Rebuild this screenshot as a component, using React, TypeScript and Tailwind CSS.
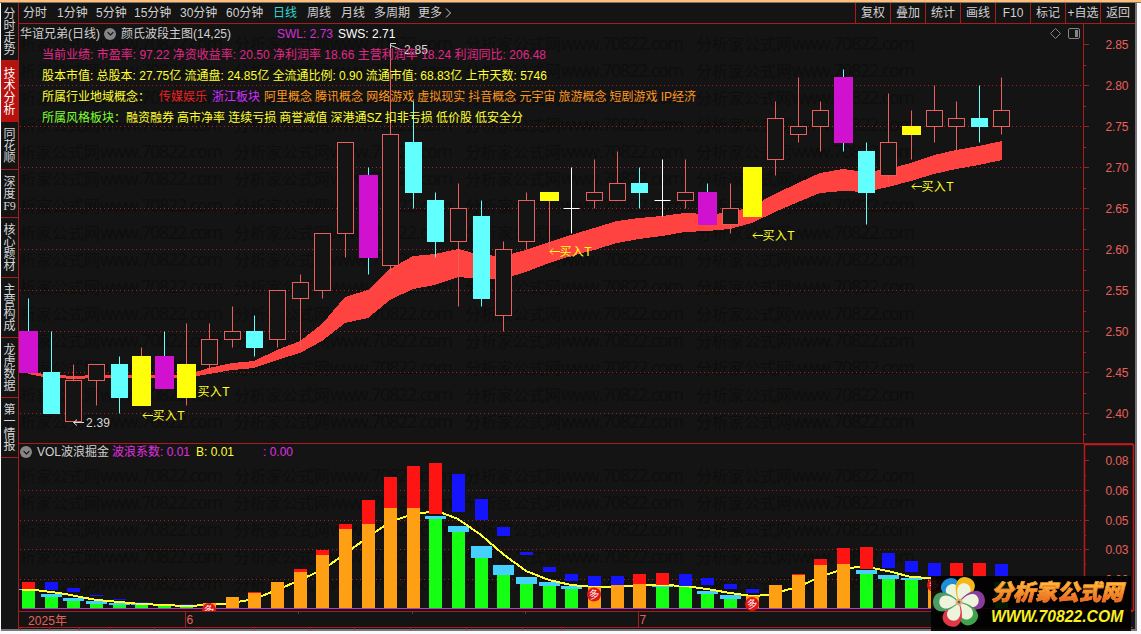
import { HiOutlineChevronDown } from 'react-icons/hi';

const FONT = "font-['Liberation_Sans','Noto_Sans_CJK_SC',sans-serif]";

// Bar centres on the time axis, shared by both panels
const BAR_X = [
  28, 51, 73, 96, 119, 141, 164, 186, 209, 232, 254, 277, 300, 322, 345, 368, 390, 413, 435, 458, 481, 503,
  526, 549, 571, 594, 617, 639, 662, 685, 707, 730, 752, 775, 798, 820, 843, 866, 888, 911, 934, 956, 979, 1001,
];
const barX = (i: number) => BAR_X[i] + 0.5;
const priceY = (p: number) => Math.round(85 + (280 - p) * 8.2) + 0.5;

type Kind = 'up' | 'down' | 'buy' | 'sell' | 'doji';

// [kind, high, bodyTop, bodyBottom, low] in cents
const CANDLES: [Kind, number, number, number, number][] = [
  ['sell', 254, 250, 245, 245],
  ['down', 250, 245, 240, 240],
  ['up', 246, 244, 239, 239],
  ['up', 246, 246, 244, 241],
  ['down', 247, 246, 242, 240],
  ['buy', 248, 247, 241, 241],
  ['sell', 250, 247, 243, 243],
  ['buy', 251, 246, 242, 241],
  ['up', 251, 249, 246, 245],
  ['up', 253, 250, 249, 248],
  ['down', 252, 250, 248, 247],
  ['up', 255, 255, 249, 248],
  ['up', 257, 256, 254, 248],
  ['up', 262, 262, 255, 254],
  ['up', 273, 273, 262, 259],
  ['sell', 270, 269, 259, 257],
  ['up', 285, 274, 258, 257],
  ['down', 278, 273, 267, 265],
  ['down', 267, 266, 261, 259],
  ['up', 268, 265, 261, 253],
  ['down', 266, 264, 254, 253],
  ['up', 261, 260, 252, 250],
  ['up', 267, 266, 261, 260],
  ['buy', 267, 267, 266, 260],
  ['doji', 270, 265, 265, 262],
  ['up', 271, 267, 266, 265],
  ['up', 272, 268, 266, 266],
  ['down', 270, 268, 267, 265],
  ['doji', 271, 266, 266, 264],
  ['up', 271, 267, 266, 265],
  ['sell', 268, 267, 263, 263],
  ['up', 268, 265, 263, 262],
  ['buy', 270, 270, 264, 264],
  ['up', 278, 276, 271, 269],
  ['up', 281, 275, 274, 273],
  ['up', 278, 277, 275, 272],
  ['sell', 282, 281, 273, 272],
  ['down', 273, 272, 267, 263],
  ['up', 279, 273, 269, 268],
  ['buy', 277, 275, 274, 271],
  ['up', 280, 277, 275, 273],
  ['up', 278, 276, 275, 272],
  ['down', 280, 276, 275, 273],
  ['up', 281, 277, 275, 274],
];

// Moving band: [x, top, bottom]
const BAND = [
  [28, 370, 374], [43, 374, 377], [73, 376, 379], [96, 375, 378], [186, 375, 378], [209, 368, 374],
  [232, 363, 370], [254, 361, 368], [277, 350, 360], [300, 341, 353], [322, 324, 341], [345, 297, 323],
  [368, 290, 318], [390, 269, 300], [413, 256, 289], [435, 254, 285], [458, 249, 277], [481, 255, 279],
  [503, 256, 279], [526, 250, 272], [549, 242, 263], [571, 235, 256], [594, 228, 250], [617, 221, 243],
  [639, 218, 239], [662, 216, 236], [685, 213, 232], [707, 214, 231], [730, 213, 229], [752, 206, 223],
  [775, 194, 212], [798, 183, 202], [820, 173, 193], [843, 169, 191], [866, 172, 192], [888, 169, 187],
  [911, 163, 181], [934, 155, 174], [956, 150, 169], [979, 146, 165], [1002, 141, 160],
];
const bandPoints = [
  ...BAND.map(([x, t]) => `${x},${t}`),
  ...[...BAND].reverse().map(([x, , b]) => `${x},${b}`),
].join(' ');

type Vol = { g?: number; o?: number; r?: [number, number]; b?: [number, number]; c?: [number, number] };
const VOLS: Vol[] = [
  { g: 589, r: [582, 589], c: [589, 590] },
  { g: 596, b: [582, 590], c: [594, 597] },
  { g: 600, b: [588, 592], c: [598, 601] },
  { g: 603, b: [595, 596], c: [601, 604] },
  { g: 604, b: [599, 600], c: [603, 605] },
  { g: 605, b: [602, 603], c: [603, 605] },
  { g: 606, c: [605, 606] },
  { g: 607, b: [604, 605], c: [606, 607] },
  { o: 603 },
  { o: 597 },
  { o: 593, r: [592, 593] },
  { o: 582 },
  { o: 572, r: [569, 572] },
  { o: 555, r: [550, 555] },
  { o: 529, r: [524, 529] },
  { o: 524, r: [500, 524] },
  { o: 508, r: [477, 508] },
  { o: 508, r: [466, 508] },
  { g: 519, r: [463, 514], c: [516, 519] },
  { g: 532, b: [474, 512], c: [526, 532] },
  { g: 558, b: [499, 520], c: [546, 558] },
  { g: 575, b: [527, 536], c: [565, 575] },
  { g: 584, b: [552, 555], c: [577, 584] },
  { g: 586, b: [567, 572], c: [582, 586] },
  { g: 589, b: [574, 581], c: [586, 589] },
  { o: 587, b: [576, 586] },
  { o: 585, b: [576, 585] },
  { o: 584, r: [574, 584] },
  { g: 586, r: [573, 585], c: [585, 587] },
  { g: 587, b: [574, 586], c: [586, 587] },
  { g: 594, b: [578, 585], c: [591, 594] },
  { g: 599, b: [584, 589], c: [595, 599] },
  { o: 596, b: [589, 593] },
  { o: 585 },
  { o: 575, r: [574, 575] },
  { o: 565, r: [559, 565] },
  { o: 564, r: [548, 564] },
  { g: 574, r: [547, 569], c: [570, 574] },
  { g: 579, b: [553, 568], c: [575, 579] },
  { g: 580, b: [561, 572], c: [578, 580] },
  { o: 580, b: [563, 576] },
  { r: [563, 576] },
  { r: [563, 576] },
  { g: 582, b: [564, 576] },
];

const VOL_LINE =
  '22,590 35,590 51,592 66,594 80,597 97,600 119,602 142,604 164,605 186,606 209,605 232,603 254,599 277,590 300,580 322,570 345,554 368,537 390,522 413,514 430,512 442,513 458,519 481,535 503,554 526,571 549,580 571,585 594,587 617,587 639,585 662,585 685,586 707,589 730,593 752,596 768,595 775,593 798,587 820,577 843,569 858,567 872,568 888,571 911,577 931,578';

const PERIODS = [
  { label: '分时', w: 'w-[34px]' },
  { label: '1分钟', w: 'w-[39px]' },
  { label: '5分钟', w: 'w-[38px]' },
  { label: '15分钟', w: 'w-[46px]' },
  { label: '30分钟', w: 'w-[46px]' },
  { label: '60分钟', w: 'w-[47px]' },
  { label: '日线', w: 'w-[34px]', active: true },
  { label: '周线', w: 'w-[34px]' },
  { label: '月线', w: 'w-[33px]' },
  { label: '多周期', w: 'w-[44px]' },
  { label: '更多', w: 'w-[27px]' },
];

const TOOLS = ['复权', '叠加', '统计', '画线', 'F10', '标记', '+自选', '返回'];

const SIDE_TABS = [
  { text: '分时走势', h: 'h-[58px]' },
  { text: '技术分析', h: 'h-[61px]', active: true },
  { text: '同花顺', h: 'h-[48px]' },
  { text: '深度F9', h: 'h-[48px]' },
  { text: '核心题材', h: 'h-[60px]' },
  { text: '主营构成', h: 'h-[60px]' },
  { text: '龙虎数据', h: 'h-[60px]' },
  { text: '第一情报', h: 'h-[60px]' },
];

const BUY_MARKS = [
  [142, 415],
  [187, 391],
  [549, 251],
  [752, 235],
  [911, 186],
];

function Sidebar() {
  return (
    <nav className="w-[18px] shrink-0 border-r border-[#a81c1c] text-[12px] leading-[12px] text-[#d4d4d4]">
      {SIDE_TABS.map((t) => (
        <div
          key={t.text}
          className={`${t.h} flex flex-col items-center justify-center ${
            t.active ? 'bg-[#b8120f] text-white' : 'border-b border-[#a81c1c]'
          }`}
        >
          {t.text.replace('F9', '').split('').map((c) => (
            <span key={c}>{c}</span>
          ))}
          {t.text.includes('F9') && <span className="font-['Liberation_Serif',serif]">F9</span>}
        </div>
      ))}
    </nav>
  );
}

function Toolbar() {
  return (
    <header className="flex h-[21px] items-stretch justify-between border-b border-[#a81c1c] text-[12px] leading-[20px] text-[#d0d0d0]">
      <div className="flex pl-1">
        {PERIODS.map((p) => (
          <span key={p.label} className={`${p.w} whitespace-nowrap ${p.active ? 'text-[#2fd8d0]' : ''}`}>
            {p.label}
          </span>
        ))}
        <svg className="mt-[5px] h-[10px] w-[7px]" viewBox="0 0 7 10" fill="none" stroke="#d0d0d0">
          <path d="M1 .5 5.5 5 1 9.5" />
        </svg>
      </div>
      <div className="flex">
        {TOOLS.map((t) => (
          <button key={t} className="w-[35px] border-l border-[#a81c1c] text-center whitespace-nowrap">
            {t}
          </button>
        ))}
      </div>
    </header>
  );
}

// Repeated faint site name behind the plots
function Watermark({ from, to }: { from: number; to: number }) {
  const rows: number[] = [];
  for (let y = 50; y < 610; y += 27) if (y > from && y < to - 4) rows.push(y);
  return (
    <g fill="#0e0e0e">
      {rows.map((y) =>
        [4, 234, 465, 696].map((x) => (
          <g key={`${x}-${y}`}>
            <text x={x} y={y} fontSize="16" textLength="96">
              分析家公式网
            </text>
            <text x={x + 96} y={y} fontSize="17.5" fontFamily="Open Sans" textLength="123">
              www.70822.com
            </text>
          </g>
        ))
      )}
    </g>
  );
}

function Candle({ i, data }: { i: number; data: (typeof CANDLES)[number] }) {
  const [kind, high, top, bottom, low] = data;
  const x = barX(i);
  const y1 = priceY(top);
  const y2 = priceY(bottom);
  const wick = { up: '#e8605c', down: '#62ffff', buy: '#e8605c', sell: '#62ffff', doji: '#ffffff' }[kind];

  if (kind === 'doji') {
    return (
      <g stroke="#fff">
        <path d={`M${x} ${priceY(high)}V${priceY(low)}M${x - 8} ${y1}h16`} />
      </g>
    );
  }
  return (
    <g>
      <path d={`M${x} ${priceY(high)}V${y1}M${x} ${y2}V${priceY(low)}`} stroke={wick} />
      {kind === 'up' && <rect x={x - 8} y={y1} width="16" height={y2 - y1} fill="#141414" stroke="#e8605c" />}
      {kind === 'down' && <rect x={x - 8.5} y={y1 - 0.5} width="17" height={y2 - y1 + 1} fill="#62ffff" />}
      {kind === 'buy' && <rect x={x - 9.5} y={y1 - 0.5} width="19" height={y2 - y1 + 1} fill="#ffff0a" />}
      {kind === 'sell' && <rect x={x - 9.5} y={y1 - 0.5} width="19" height={y2 - y1 + 1} fill="#d012d0" />}
    </g>
  );
}

function PriceChart() {
  const ticks = [285, 280, 275, 270, 265, 260, 255, 250, 245, 240];
  return (
    <svg className="block h-[419px] w-[1116px]" viewBox="19 24 1116 419">
      <Watermark from={24} to={443} />
      {ticks.slice(1).map((p) => (
        <path key={p} d={`M20 ${priceY(p)}H1083`} stroke="#a82020" strokeDasharray="1 3" />
      ))}
      <polygon points={bandPoints} fill="#ff4340" shapeRendering="crispEdges" />
      {CANDLES.map((c, i) => (
        <Candle key={i} i={i} data={c} />
      ))}

      <path d="M1083.5 24V443" stroke="#a81c1c" />
      {ticks.map((p) => (
        <g key={p}>
          <path d={`M1083 ${priceY(p)}h6M1083 ${priceY(p) + 21}h3`} stroke="#a81c1c" />
          <text x="1105.5" y={priceY(p) + 4.5} fontSize="12" fill="#e8605c" textLength="23">
            {(p / 100).toFixed(2)}
          </text>
        </g>
      ))}

      {/* highest and lowest prices */}
      <g stroke="#d8d8d8" fill="none">
        <path d="M402 50 391 45.500M396 43.500H390.500V48" />
        <path d="M84 422.500H73.500M77 419.500 73.500 422.500 77 425.500" />
      </g>
      <g fontSize="12" fill="#d8d8d8">
        <text x="404" y="54" textLength="24">2.85</text>
        <text x="86" y="427" textLength="24">2.39</text>
      </g>

      {BUY_MARKS.map(([x, y]) => (
        <g key={x}>
          {x !== 187 && <path d={`M${x + 11} ${y + 0.5}H${x + 1}M${x + 4} ${y - 2.5}l-3 3 3 3`} stroke="#ffff20" fill="none" />}
          <text x={x + 10.5} y={y + 4.5} fontSize="12" fill="#ffff20" textLength="32">
            买入T
          </text>
        </g>
      ))}

      <g stroke="#858585" fill="none">
        <path d="M1055.500 28.500 1060.500 33.500 1055.500 38.500 1050.500 33.500Z" />
        <rect x="1068.500" y="28.500" width="11" height="10" rx="1.500" />
      </g>
      <rect x="1075" y="30" width="3" height="7" fill="#858585" />
    </svg>
  );
}

function DuoBadge({ x, y }: { x: number; y: number }) {
  return (
    <g transform={`translate(${x} ${y})`}>
      <circle r="7" fill="#e01414" />
      <text y="3.800" fontSize="10.500" fill="#fff" textAnchor="middle" transform="rotate(-12)">
        多
      </text>
    </g>
  );
}

function VolumeChart() {
  const labels: [string, number][] = [
    ['0.08', 460], ['0.06', 490], ['0.05', 520], ['0.03', 549], ['0.02', 579],
  ];
  return (
    <svg className="block h-[168px] w-[1116px]" viewBox="19 443 1116 168">
      <Watermark from={460} to={611} />
      <path d="M19 443.500H1133" stroke="#a81c1c" />
      {labels.slice(1).map(([l, y]) => (
        <path key={l} d={`M20 ${y + 0.5}H1083`} stroke="#a82020" strokeDasharray="1 3" />
      ))}

      {VOLS.map((v, i) => (
        <g key={i}>
          {v.g && <rect x={barX(i) - 6.5} y={v.g} width="13" height={608 - v.g} fill="#14ff14" />}
          {v.c && <rect x={barX(i) - 10.5} y={v.c[0]} width="21" height={v.c[1] - v.c[0]} fill="#46d0ff" />}
        </g>
      ))}
      <polyline points={VOL_LINE} fill="none" stroke="#ffff30" strokeWidth="2" shapeRendering="crispEdges" />
      {VOLS.map((v, i) => (
        <g key={i}>
          {v.o && <rect x={barX(i) - 6.5} y={v.o} width="13" height={608 - v.o} fill="#ffa014" />}
          {v.r && <rect x={barX(i) - 6.5} y={v.r[0]} width="13" height={v.r[1] - v.r[0]} fill="#ff1414" />}
          {v.b && <rect x={barX(i) - 6.5} y={v.b[0]} width="13" height={v.b[1] - v.b[0]} fill="#1414ff" />}
        </g>
      ))}
      <path d="M22 608.500H1083" stroke="#b838c8" />
      <DuoBadge x={209} y={610} />
      <DuoBadge x={594} y={594.5} />
      <DuoBadge x={752} y={604} />
      <DuoBadge x={934} y={585} />

      <rect x="1084.500" y="444.500" width="49" height="166" fill="none" stroke="#c01818" strokeWidth="1.500" />
      {labels.map(([l, y]) => (
        <g key={l}>
          <path d={`M1084 ${y + 0.5}h5M1084 ${y + 15.5}h2`} stroke="#a81c1c" />
          <text x="1105.500" y={y + 5} fontSize="12" fill="#e8605c" textLength="23">
            {l}
          </text>
        </g>
      ))}
    </svg>
  );
}

function TimeAxis() {
  return (
    <svg className="block h-[19px] w-[1116px]" viewBox="19 611 1116 19">
      <path d="M19 611.500H1133M19 627.500H1133M185.500 611V627M638.500 611V627" stroke="#a81c1c" />
      <path
        d="M298.500 612v2M412.500 612v2M525.500 612v2M20.500 628v2M49.500 628v2M79.500 628v2M110.500 628v2M154.500 628v2M198.500 628v2M254.500 628v2M310.500 628v2M354.500 628v2M410.500 628v2M466.500 628v2M522.500 628v2M561.500 628v2"
        stroke="#a81c1c"
      />
      <g fontSize="12" fill="#e8605c">
        <text x="28" y="624.500" textLength="39">2025年</text>
        <text x="186.500" y="624">6</text>
        <text x="639.500" y="624">7</text>
      </g>
    </svg>
  );
}

function Collapse() {
  return (
    <span className="flex size-3 items-center justify-center rounded-full bg-[#858585] text-[#141414]">
      <HiOutlineChevronDown className="size-[9px]" strokeWidth={3} />
    </span>
  );
}

function Line({ words, className }: { words: string; className: string }) {
  return (
    <div className={`flex justify-between ${className}`}>
      {words.split(' ').map((w, i) => (
        <span key={i}>{w}</span>
      ))}
    </div>
  );
}

function StockInfo() {
  return (
    <div className="absolute top-0 left-0 text-[12px] leading-[18px] whitespace-nowrap">
      <div className="flex h-[22px] items-center pb-[3px] pl-px text-[#d0d0d0]">
        <span className="w-[84px]">华谊兄弟(日线)</span>
        <Collapse />
        <span className="ml-[5px] w-[156px]">颜氏波段主图(14,25)</span>
        <span className="w-[61px] text-[#d22fd8]">SWL: 2.73</span>
        <span className="text-white">SWS: 2.71</span>
      </div>
      <div className="flex flex-col gap-[3px] pl-[23px]">
        <Line
          className="w-[504px] text-[#e02888]"
          words="当前业绩: 市盈率: 97.22 净资收益率: 20.50 净利润率 18.66 主营利润率 18.24 利润同比: 206.48"
        />
        <Line
          className="w-[505px] text-[#ffff30]"
          words="股本市值: 总股本: 27.75亿 流通盘: 24.85亿 全流通比例: 0.90 流通市值: 68.83亿 上市天数: 5746"
        />
        <div className="flex">
          <span className="w-[117px] text-[#ffff30]">所属行业地域概念：</span>
          <span className="w-[53px] text-[#f02020]">传媒娱乐</span>
          <span className="w-[52px] text-[#d22fff]">浙江板块</span>
          <Line
            className="w-[432px] text-[#ff9820]"
            words="阿里概念 腾讯概念 网络游戏 虚拟现实 抖音概念 元宇宙 旅游概念 短剧游戏 IP经济"
          />
        </div>
        <div className="flex">
          <span className="w-[84px] text-[#80ff30]">所属风格板块：</span>
          <Line
            className="w-[397px] text-[#ffff30]"
            words="融资融券 高市净率 连续亏损 商誉减值 深港通SZ 扣非亏损 低价股 低安全分"
          />
        </div>
      </div>
    </div>
  );
}

function VolumeInfo() {
  return (
    <div className="absolute top-px left-0 flex h-4 items-center pl-px text-[12px] whitespace-nowrap">
      <Collapse />
      <span className="ml-[5px] w-[75px] text-[#d0d0d0]">VOL波浪掘金</span>
      <span className="w-[84px] text-[#e02fe0]">波浪系数: 0.01</span>
      <span className="w-[67px] text-[#ffff30]">B: 0.01</span>
      <span className="text-[#e02fe0]">: 0.00</span>
    </div>
  );
}

// Six-petal flower beside the site name
const PETALS = [
  { a: -30, c: '#1d8fd8' },
  { a: 22, c: '#f5b81c' },
  { a: 84, c: '#8a3c9c' },
  { a: 146, c: '#3fa24c' },
  { a: 204, c: '#e03848' },
  { a: 270, c: '#4c9c68' },
];

function SiteLogo() {
  return (
    <div className="absolute top-[576px] left-[931px] flex h-[55px] w-[200px] bg-black/90">
      <svg className="mt-px ml-px h-[50px] w-[53px] shrink-0" viewBox="-27 -25 53 50">
        {PETALS.map((p) => (
          <g key={p.a} transform={`rotate(${p.a})`}>
            <path d="M0 0C-5 -4 -11 -13 -9 -20C-7 -28 7 -28 9 -20C11 -13 5 -4 0 0Z" fill={p.c} />
            <path d="M0 -1C-4 -5 -8 -11 -6 -16C-4 -21 4 -21 6 -16C8 -11 4 -5 0 -1Z" fill="#eef4dc" />
          </g>
        ))}
        <circle r="3.500" fill="#e8b080" />
        <circle r="1.500" fill="#58703c" />
      </svg>
      <div className="flex flex-col pt-[4px] pl-[6px] whitespace-nowrap italic">
        <span className="bg-gradient-to-b from-[#ffc840] to-[#e84818] bg-clip-text pr-1 text-[22px] leading-[26px] font-black text-transparent [-webkit-text-stroke:0.6px_#f08a28]">
          分析家公式网
        </span>
        <span className="text-[15.7px] leading-[22px] font-bold text-[#f8f020]">WWW.70822.COM</span>
      </div>
    </div>
  );
}

export default function App() {
  return (
    <div className={`relative h-[634px] w-[1141px] overflow-hidden bg-[#fbf9fb] ${FONT}`}>
      <div className="h-[3px] border-b border-[#7c7468] bg-[#ffc07c]" />
      <div className="ml-px flex h-[628px] w-[1136px] border-r-2 border-b-2 border-[#77777b] bg-[#141414]">
        <Sidebar />
        <main className="w-[1116px] shrink-0">
          <Toolbar />
          <section className="relative">
            <PriceChart />
            <StockInfo />
          </section>
          <section className="relative">
            <VolumeChart />
            <VolumeInfo />
          </section>
          <TimeAxis />
        </main>
      </div>
      <SiteLogo />
    </div>
  );
}
